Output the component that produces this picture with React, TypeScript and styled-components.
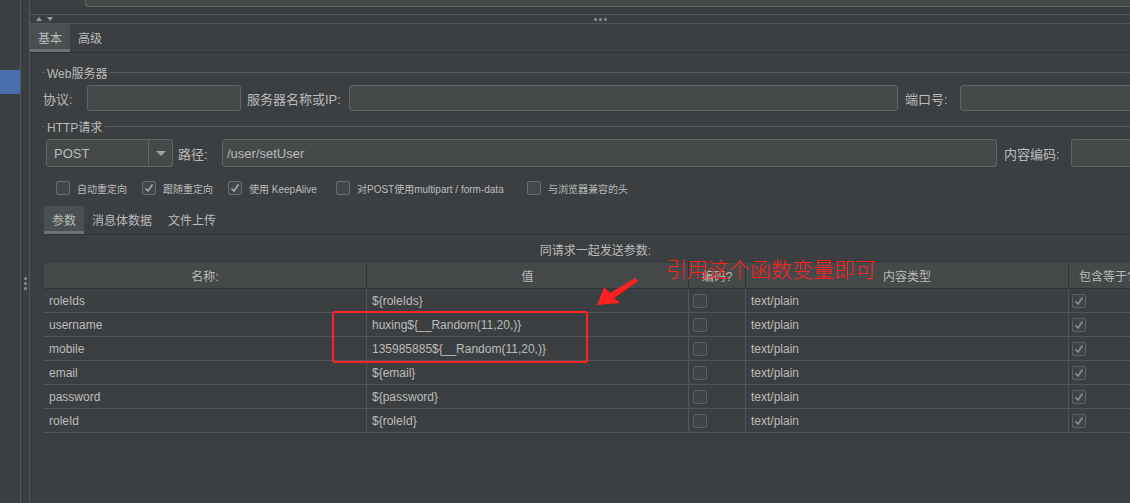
import React from 'react'
import styled, {createGlobalStyle, css} from 'styled-components'

const GlobalStyle = createGlobalStyle`
  *, *::before, *::after {
    box-sizing: border-box;
  }
  html, body {
    margin: 0;
    padding: 0;
    background: #3c3f41;
    overflow: hidden;
  }
  body {
    font-family: "Liberation Sans", "Noto Sans CJK SC", sans-serif;
    color: #bbbbbb;
  }
`

const Page = styled.div`
  position: relative;
  display: flex;
  width: 1130px;
  height: 503px;
  overflow: hidden;
`

const Sidebar = styled.div`
  flex: none;
  width: 21px;
  border-right: 1px solid #555555;
`

const SelectedItem = styled.div`
  margin-top: 70px;
  height: 24px;
  background: #4b6eaf;
`

const Gutter = styled.div`
  flex: none;
  width: 9px;
  padding-top: 277px;
  border-right: 1px solid #555555;
  display: flex;
  flex-direction: column;
  align-items: center;
  gap: 2px;
`

const Dot = styled.span`
  width: 3px;
  height: 3px;
  border-radius: 50%;
  background: #8c8c8c;
`

const Main = styled.div`
  flex: none;
  width: 1135px;
  display: flex;
  flex-direction: column;
`

const TopPanel = styled.div`
  height: 15px;
  padding-left: 55px;
  border-bottom: 1px solid #555555;
`

const TextAreaStub = styled.div`
  height: 7px;
  background: #45494a;
  border: 1px solid #646464;
  border-top: none;
  border-right: none;
  border-bottom-left-radius: 3px;
`

const Splitter = styled.div`
  height: 9px;
  display: grid;
  grid-template-columns: 1fr auto 1fr;
  align-items: center;
  padding-left: 6px;
  border-bottom: 1px solid #555555;
`

const Arrows = styled.div`
  display: flex;
  gap: 5px;
  align-items: center;
`

const Triangle = styled.span<{$down?: boolean}>`
  width: 0;
  height: 0;
  border-left: 3.5px solid transparent;
  border-right: 3.5px solid transparent;
  ${(p) =>
    p.$down
      ? css`border-top: 4px solid #9a9a9a;`
      : css`border-bottom: 4px solid #9a9a9a;`}
`

const SplitDots = styled.div`
  display: flex;
  gap: 2px;
`

const TabBar = styled.div<{$indent?: number}>`
  display: flex;
  height: 29px;
  margin-left: ${(p) => p.$indent || 0}px;
  border-bottom: 1px solid #323232;
`

const Tab = styled.div<{$active?: boolean}>`
  display: flex;
  align-items: center;
  padding: 0 8px 2px;
  font-size: 12px;
  color: #bbbbbb;
  ${(p) =>
    p.$active &&
    css`
      background: #4b4f51;
      box-shadow: inset 0 -3px 0 #6d7175;
    `}
`

const Content = styled.div`
  padding: 12px 0 0 12px;
`

const SectionTitle = styled.div<{$gap: number}>`
  display: flex;
  align-items: center;
  height: 15px;
  margin-top: ${(p) => p.$gap}px;
  font-size: 12px;

  &::before {
    content: '';
    width: 3px;
    height: 1px;
    background: #5b5e60;
  }
  &::after {
    content: '';
    flex: 1;
    height: 1px;
    margin-left: 3px;
    background: #5b5e60;
  }
`

const TitleText = styled.span`
  margin-left: 2px;
`

const FieldRow = styled.div<{$indent: number; $h: number}>`
  display: flex;
  align-items: center;
  height: ${(p) => p.$h}px;
  margin-top: 5px;
  padding-left: ${(p) => p.$indent}px;
`

const Label = styled.span<{$w: number; $gap?: number}>`
  flex: none;
  width: ${(p) => p.$w}px;
  margin-left: ${(p) => p.$gap || 0}px;
  font-size: 13px;
  white-space: nowrap;
`

const Input = styled.div<{$w: number}>`
  flex: none;
  width: ${(p) => p.$w}px;
  height: 100%;
  display: flex;
  align-items: center;
  padding-left: 4px;
  background: #45494a;
  border: 1px solid #646464;
  border-radius: 3px;
  font-size: 13px;
  color: #bbbbbb;
`

const Combo = styled.div`
  flex: none;
  display: flex;
  width: 127px;
  height: 100%;
  background: #45494a;
  border: 1px solid #646464;
  border-radius: 3px;
  font-size: 13px;
`

const ComboValue = styled.div`
  flex: 1;
  display: flex;
  align-items: center;
  padding-left: 7px;
`

const ComboButton = styled.div`
  width: 24px;
  display: flex;
  align-items: center;
  justify-content: center;
  border-left: 1px solid #646464;

  &::after {
    content: '';
    border-left: 5px solid transparent;
    border-right: 5px solid transparent;
    border-top: 5px solid #a0a0a0;
  }
`

const CheckRow = styled.div`
  display: flex;
  align-items: center;
  height: 14px;
  margin-top: 14px;
  padding-left: 14px;
`

const CheckItem = styled.div<{$w: number}>`
  flex: none;
  display: flex;
  align-items: center;
  width: ${(p) => p.$w}px;
  font-size: 10px;
  white-space: nowrap;
`

const Box = styled.span<{$dim?: boolean}>`
  flex: none;
  display: inline-flex;
  align-items: center;
  justify-content: center;
  width: 14px;
  height: 14px;
  border: 1px solid ${(p) => (p.$dim ? '#5e6163' : '#6b6b6b')};
  border-radius: 2px;
  background: ${(p) => (p.$dim ? '#3f4345' : '#43474a')};
  margin-right: 7px;
`

const Check = ({on, dim}: {on?: boolean; dim?: boolean}) => (
  <Box $dim={dim}>
    {on && (
      <svg width="12" height="12" viewBox="0 0 12 12">
        <polyline
          points="2.5,6.5 5,9 9.5,2.5"
          fill="none"
          stroke={dim ? '#8e8e8e' : '#a8a8a8'}
          strokeWidth="1.6"
        />
      </svg>
    )}
  </Box>
)

const SubTabs = styled(TabBar)`
  margin-top: 11px;
`

const Caption = styled.div`
  height: 18px;
  margin-top: 5px;
  width: 1107px;
  display: flex;
  align-items: center;
  justify-content: center;
  font-size: 12px;
`

const Table = styled.div`
  margin: 5px 0 0 2px;
  width: 1105px;
`

const columns = '323px 322px 57px 323px 80px'

const HeaderRow = styled.div`
  display: grid;
  grid-template-columns: ${columns};
  height: 26px;
  background: #45494a;
  border-bottom: 1px solid #323232;
`

const HeaderCell = styled.div<{$start?: number}>`
  display: flex;
  align-items: center;
  justify-content: ${(p) => (p.$start ? 'flex-start' : 'center')};
  padding-left: ${(p) => p.$start || 0}px;
  border-right: 1px solid #323232;
  font-size: 12px;
  white-space: nowrap;
  overflow: hidden;
`

const Row = styled.div`
  display: grid;
  grid-template-columns: ${columns};
  height: 24px;
  border-bottom: 1px solid #535658;
`

const Cell = styled.div<{$pad?: number}>`
  display: flex;
  align-items: center;
  padding-left: ${(p) => p.$pad ?? 5}px;
  border-right: 1px solid #535658;
  font-size: 12px;
  white-space: nowrap;
  overflow: hidden;
`

const RedBox = styled.div`
  position: absolute;
  left: 332px;
  top: 311px;
  width: 256px;
  height: 52px;
  border: 2px solid #ff2424;
  border-radius: 3px;
`

const ArrowMark = styled.svg`
  position: absolute;
  left: 590px;
  top: 272px;
`

const Note = styled.div`
  position: absolute;
  left: 666px;
  top: 256px;
  font-family: "Noto Sans CJK SC", sans-serif;
  font-size: 21px;
  font-weight: 300;
  line-height: 24px;
  color: #ff2020;
  white-space: nowrap;
`

const params = [
  {name: 'roleIds', value: '${roleIds}'},
  {name: 'username', value: 'huxing${__Random(11,20,)}'},
  {name: 'mobile', value: '135985885${__Random(11,20,)}'},
  {name: 'email', value: '${email}'},
  {name: 'password', value: '${password}'},
  {name: 'roleId', value: '${roleId}'},
]

export default function App() {
  return (
    <Page>
      <GlobalStyle />
      <Sidebar>
        <SelectedItem />
      </Sidebar>
      <Gutter>
        <Dot />
        <Dot />
        <Dot />
      </Gutter>
      <Main>
        <TopPanel>
          <TextAreaStub />
        </TopPanel>
        <Splitter>
          <Arrows>
            <Triangle />
            <Triangle $down />
          </Arrows>
          <SplitDots>
            <Dot />
            <Dot />
            <Dot />
          </SplitDots>
          <span />
        </Splitter>
        <TabBar>
          <Tab $active>基本</Tab>
          <Tab>高级</Tab>
        </TabBar>
        <Content>
          <SectionTitle $gap={0}>
            <TitleText>Web服务器</TitleText>
          </SectionTitle>
          <FieldRow $indent={1} $h={26}>
            <Label $w={44}>协议:</Label>
            <Input $w={154} />
            <Label $w={102} $gap={6}>服务器名称或IP:</Label>
            <Input $w={549} />
            <Label $w={55} $gap={7}>端口号:</Label>
            <Input $w={200} />
          </FieldRow>
          <SectionTitle $gap={8}>
            <TitleText>HTTP请求</TitleText>
          </SectionTitle>
          <FieldRow $indent={4} $h={28}>
            <Combo>
              <ComboValue>POST</ComboValue>
              <ComboButton />
            </Combo>
            <Label $w={44} $gap={5}>路径:</Label>
            <Input $w={775}>/user/setUser</Input>
            <Label $w={67} $gap={7}>内容编码:</Label>
            <Input $w={100} />
          </FieldRow>
          <CheckRow>
            <CheckItem $w={86}>
              <Check />
              自动重定向
            </CheckItem>
            <CheckItem $w={86}>
              <Check on />
              跟随重定向
            </CheckItem>
            <CheckItem $w={108}>
              <Check on />
              使用 KeepAlive
            </CheckItem>
            <CheckItem $w={191}>
              <Check />
              对POST使用multipart / form-data
            </CheckItem>
            <CheckItem $w={120}>
              <Check />
              与浏览器兼容的头
            </CheckItem>
          </CheckRow>
          <SubTabs $indent={2}>
            <Tab $active>参数</Tab>
            <Tab>消息体数据</Tab>
            <Tab>文件上传</Tab>
          </SubTabs>
          <Caption>同请求一起发送参数:</Caption>
          <Table>
            <HeaderRow>
              <HeaderCell>名称:</HeaderCell>
              <HeaderCell>值</HeaderCell>
              <HeaderCell>编码?</HeaderCell>
              <HeaderCell>内容类型</HeaderCell>
              <HeaderCell $start={10}>包含等于?</HeaderCell>
            </HeaderRow>
            {params.map((p) => (
              <Row key={p.name}>
                <Cell>{p.name}</Cell>
                <Cell>{p.value}</Cell>
                <Cell $pad={4}>
                  <Check dim />
                </Cell>
                <Cell>text/plain</Cell>
                <Cell $pad={3}>
                  <Check dim on />
                </Cell>
              </Row>
            ))}
          </Table>
        </Content>
      </Main>
      <RedBox />
      <ArrowMark width="50" height="38" viewBox="590 272 50 38">
        <polygon
          points="597,305 604,287 610,293 635,278 638,281 614,298 620,303"
          fill="#ff2020"
        />
      </ArrowMark>
      <Note>引用这个函数变量即可</Note>
    </Page>
  )
}
